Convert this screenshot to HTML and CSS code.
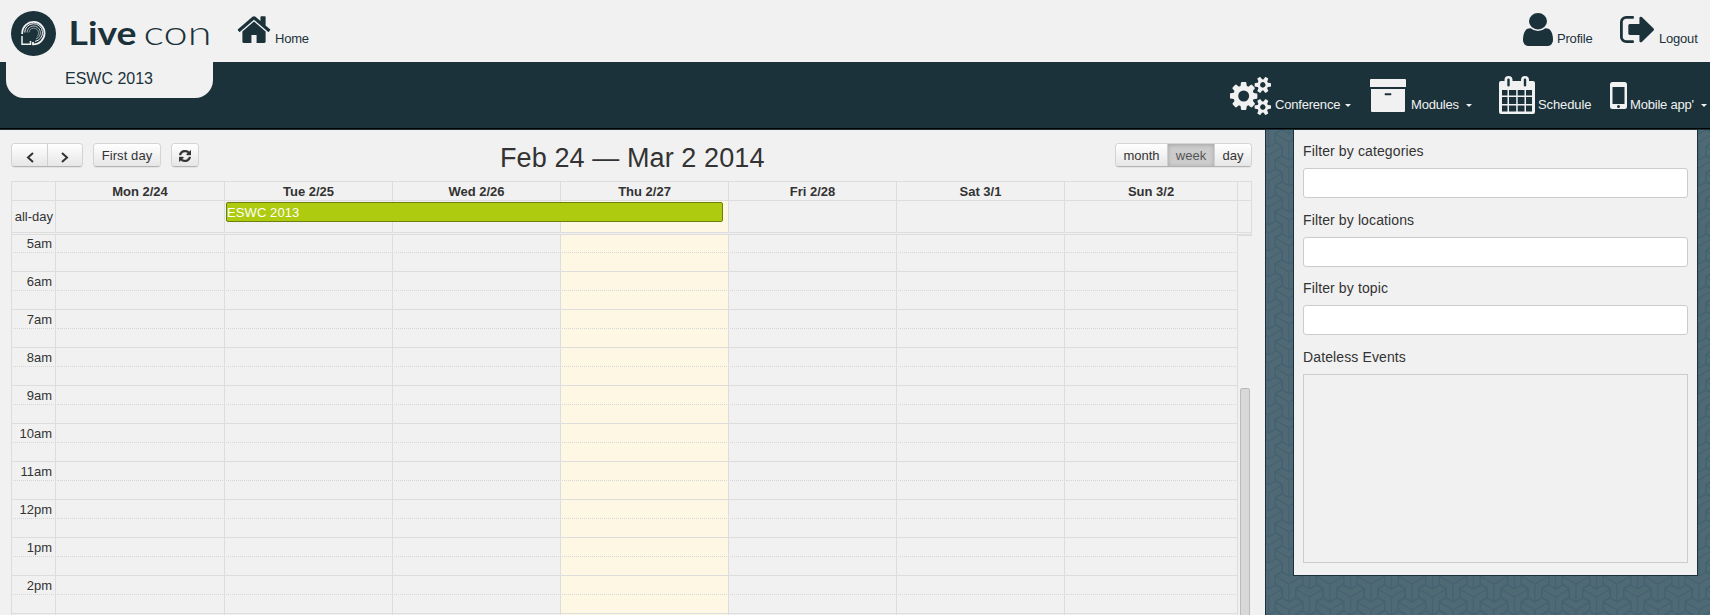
FILE: index.html
```html
<!DOCTYPE html>
<html lang="en">
<head>
<meta charset="utf-8">
<title>Live con - Schedule</title>
<link rel="stylesheet" href="styles.css">
</head>
<body>
<svg class="backdrop" width="1710" height="615" aria-hidden="true">
  <defs>
    <pattern id="weave" width="41" height="26" patternUnits="userSpaceOnUse" patternTransform="translate(1289 610)">
      <g id="weave-lines" fill="none" stroke="#446271" stroke-width="1.3">
        <g id="tripod"><path d="M0 0L-13.7-8M0 0L13.7-8M0 0V18M0-8L-6.8-12L-13.7-8V0L-6.8 4V14L0 18L6.8 14V4L13.7 0V-8L6.8-12Z"/></g>
        <use href="#tripod" y="26"/><use href="#tripod" x="41"/><use href="#tripod" x="41" y="26"/>
        <use href="#tripod" x="20.5" y="13"/><use href="#tripod" x="20.5" y="-13"/>
        <use href="#tripod" x="20.5" y="39"/>
      </g>
    </pattern>
  </defs>
  <rect width="1710" height="615" fill="#4f6975"/>
  <rect width="1710" height="615" fill="url(#weave)"/>
</svg>

<header class="top">
  <svg class="logo" width="220" height="62" viewBox="0 0 220 62">
    <circle cx="33.5" cy="33.5" r="22.5" fill="#1b323b"/>
    <g fill="none" stroke="#f1f1f1">
      <path stroke-width="1.8" d="M22.2 34V32.500A11.200 11.200 0 1 1 33 44.300V42"/>
      <path stroke-width="1.500" d="M22 36V44.300H30.500V41"/>
      <path stroke-width="1" d="M24.700 32.500A8.900 8.900 0 1 1 35 41.400"/>
      <path stroke-width=".7" d="M27 32.500A6.700 6.700 0 1 1 36 39"/>
      <path stroke-width=".5" d="M29 32.500A4.800 4.800 0 1 1 37 36.500"/>
    </g>
    <text class="logo-live" x="68.5" y="45" textLength="68" lengthAdjust="spacingAndGlyphs">Live</text>
    <text class="logo-con" x="143.5" y="45" textLength="68" lengthAdjust="spacingAndGlyphs">con</text>
  </svg>
  <a class="link home"><svg width="34" height="27" viewBox="53 245 1686 1291" preserveAspectRatio="none"><path d="M1472 992v480q0 26-19 45t-45 19h-384v-384h-256v384h-384q-26 0-45-19t-19-45v-480q0-1 .5-3t.5-3l575-474 575 474q1 2 1 6zm223-69l-62 74q-8 9-21 11h-3q-13 0-21-7l-692-577-692 577q-12 8-24 7-13-2-21-11l-62-74q-8-10-7-23.500t11-21.500l719-599q32-26 76-26t76 26l244 204v-195q0-14 9-23t23-9h192q14 0 23 9t9 23v408l219 182q10 8 11 21.500t-7 23.500z"/></svg><span>Home</span></a>
  <a class="link profile"><svg width="30" height="33" viewBox="256 128 1280 1536" preserveAspectRatio="none"><path d="M1536 1399q0 109-62.500 187t-150.500 78h-854q-88 0-150.500-78t-62.500-187q0-85 8.500-160.500t31.500-152 58.500-131 94-89 134.500-34.500q131 128 313 128t313-128q76 0 134.500 34.500t94 89 58.500 131 31.500 152 8.500 160.500zm-256-887q0 159-112.500 271.500t-271.500 112.500-271.500-112.500-112.500-271.500 112.500-271.500 271.500-112.500 271.500 112.500 112.500 271.500z"/></svg><span>Profile</span></a>
  <a class="link logout"><svg width="34" height="27" viewBox="64 256 1568 1280" preserveAspectRatio="none"><path d="M704 1440q0 4 1 20t.5 26.500-3 23.500-10 19.500-20.500 6.500h-320q-119 0-203.500-84.500t-84.500-203.500v-704q0-119 84.500-203.500t203.500-84.500h320q13 0 22.500 9.500t9.500 22.500q0 4 1 20t.5 26.500-3 23.500-10 19.500-20.500 6.500h-320q-66 0-113 47t-47 113v704q0 66 47 113t113 47h312l11.500 1 11.500 3 8 5.500 7 9 2 13.500zm928-544q0 26-19 45l-544 544q-19 19-45 19t-45-19-19-45v-288h-448q-26 0-45-19t-19-45v-384q0-26 19-45t45-19h448v-288q0-26 19-45t45-19 45 19l544 544q19 19 19 45z"/></svg><span>Logout</span></a>
</header>

<nav class="bar">
  <div class="tab">ESWC 2013</div>
  <a class="item conference"><svg width="41" height="38" viewBox="-64 20 1920 1752" preserveAspectRatio="none"><path d="M832 896q0-106-75-181t-181-75-181 75-75 181 75 181 181 75 181-75 75-181zm768 512q0-52-38-90t-90-38-90 38-38 90q0 53 37.500 90.500t90.500 37.500 90.500-37.500 37.500-90.500zm0-1024q0-52-38-90t-90-38-90 38-38 90q0 53 37.500 90.500t90.500 37.500 90.500-37.500 37.500-90.500zm-384 421v185q0 10-7 19.500t-16 10.500l-155 24q-11 35-32 76 34 48 90 115 7 11 7 20 0 12-7 19-23 30-82.500 89.500t-78.500 59.500q-11 0-21-7l-115-90q-37 19-77 31-11 108-23 155-7 24-30 24h-186q-11 0-20-7.500t-10-17.500l-23-153q-34-10-75-31l-118 89q-7 7-20 7-11 0-21-8-144-133-144-160 0-9 7-19 10-14 41-53t47-61q-23-44-35-82l-152-24q-10-1-17-9.500t-7-19.500v-185q0-10 7-19.500t16-10.500l155-24q11-35 32-76-34-48-90-115-7-11-7-20 0-12 7-20 22-30 82-89t79-59q11 0 21 7l115 90q34-18 77-32 11-108 23-154 7-24 30-24h186q11 0 20 7.500t10 17.500l23 153q34 10 75 31l118-89q8-7 20-7 11 0 21 8 144 133 144 160 0 8-7 19-12 16-42 54t-45 60q23 48 34 82l152 23q10 2 17 10.500t7 19.500zm640 533v140q0 16-149 31-12 27-30 52 51 113 51 138 0 4-4 7-122 71-124 71-8 0-46-47t-52-68q-20 2-30 2t-30-2q-14 21-52 68t-46 47q-2 0-124-71-4-3-4-7 0-25 51-138-18-25-30-52-149-15-149-31v-140q0-16 149-31 13-29 30-52-51-113-51-138 0-4 4-7 4-2 35-20t59-34 30-16q8 0 46 46.500t52 67.500q20-2 30-2t30 2q51-71 92-112l6-2q4 0 124 70 4 3 4 7 0 25-51 138 17 23 30 52 149 15 149 31zm0-1024v140q0 16-149 31-12 27-30 52 51 113 51 138 0 4-4 7-122 71-124 71-8 0-46-47t-52-68q-20 2-30 2t-30-2q-14 21-52 68t-46 47q-2 0-124-71-4-3-4-7 0-25 51-138-18-25-30-52-149-15-149-31v-140q0-16 149-31 13-29 30-52-51-113-51-138 0-4 4-7 4-2 35-20t59-34 30-16q8 0 46 46.500t52 67.500q20-2 30-2t30 2q51-71 92-112l6-2q4 0 124 70 4 3 4 7 0 25-51 138 17 23 30 52 149 15 149 31z"/></svg><span>Conference</span><i class="caret"></i></a>
  <a class="item modules"><svg width="36" height="33" viewBox="0 0 36 33"><path fill-rule="evenodd" d="M1 0H35Q36 0 36 1V8H0V1Q0 0 1 0ZM1 10H35V32Q35 33 34 33H2Q1 33 1 32ZM15 14.200Q14 15.200 15 16.200H21Q22 15.200 21 14.200Z"/></svg><span>Modules</span><i class="caret"></i></a>
  <a class="item schedule"><svg width="36" height="38" viewBox="0 0 36 38"><path fill-rule="evenodd" d="M2 5H5.500V4A4 4 0 0 1 13.500 4V5H22V4A4 4 0 0 1 30 4V5H34Q36 5 36 7V36Q36 38 34 38H2Q0 38 0 36V7Q0 5 2 5ZM8.300 3.500V9.500Q8.300 10.500 9.500 10.500T10.700 9.500V3.500Q10.700 2.500 9.500 2.500T8.300 3.500ZM24.800 3.500V9.500Q24.800 10.500 26 10.500T27.200 9.500V3.500Q27.200 2.500 26 2.500T24.800 3.500ZM3 14V19.500H8.500V14ZM10 14V19.500H17.200V14ZM18.700 14V19.500H25.500V14ZM27 14V19.500H33V14ZM3 21V28H8.500V21ZM10 21V28H17.200V21ZM18.700 21V28H25.500V21ZM27 21V28H33V21ZM3 29.500V35.500H8.500V29.500ZM10 29.500V35.500H17.200V29.500ZM18.700 29.500V35.500H25.500V29.500ZM27 29.500V35.500H33V29.500Z"/></svg><span>Schedule</span></a>
  <a class="item mobile"><svg width="17" height="27" viewBox="0 0 17 27"><path fill-rule="evenodd" d="M2.500 0H14.500Q17 0 17 2.500V24.500Q17 27 14.500 27H2.500Q0 27 0 24.500V2.500Q0 0 2.500 0ZM2.500 5V22H14.500V5ZM8.500 23A1.500 1.500 0 1 0 8.500 26A1.500 1.500 0 1 0 8.500 23Z"/></svg><span>Mobile app'</span><i class="caret"></i></a>
</nav>

<main class="page">
  <section class="calendar">
    <div class="toolbar">
      <div class="group">
        <button class="btn arrow"><svg width="8" height="11" viewBox="0 0 8 11"><path d="M7 1L2 5.500L7 10"/></svg></button>
        <button class="btn arrow"><svg width="8" height="11" viewBox="0 0 8 11"><path d="M1 1L6 5.500L1 10"/></svg></button>
      </div>
      <div class="group"><button class="btn first">First day</button></div>
      <div class="group"><button class="btn refresh"><svg width="12" height="12" viewBox="0 0 1536 1536"><path fill="#333" stroke="#333" stroke-width="50" d="M1511 928q0 5-1 7-64 268-268 434.500T764 1536q-146 0-282.500-55T238 1324l-129 129q-19 19-45 19t-45-19-19-45V960q0-26 19-45t45-19h448q26 0 45 19t19 45-19 45l-137 137q71 66 161 102t187 36q134 0 250-65t186-179q11-17 53-117 8-23 30-23h192q13 0 22.500 9.500t9.500 22.500zm25-800v448q0 26-19 45t-45 19h-448q-26 0-45-19t-19-45 19-45l138-138Q969 256 768 256q-134 0-250 65T332 500q-11 17-53 117-8 23-30 23H50q-13 0-22.500-9.500T18 608v-7q65-268 270-434.500T768 0q146 0 284 55.500T1297 212l130-129q19-19 45-19t45 19 19 45z"/></svg></button></div>
      <h1 class="title">Feb 24 — Mar 2 2014</h1>
      <div class="group views">
        <button class="btn month">month</button><button class="btn week active">week</button><button class="btn day">day</button>
      </div>
    </div>
    <div class="grid">
      <div class="row head"><b></b><b>Mon 2/24</b><b>Tue 2/25</b><b>Wed 2/26</b><b>Thu 2/27</b><b>Fri 2/28</b><b>Sat 3/1</b><b>Sun 3/2</b><b></b></div>
      <div class="row allday"><b>all-day</b><b></b><b></b><b></b><b class="today"></b><b></b><b></b><b></b><b></b><div class="event">ESWC 2013</div></div>
      <div class="divider"></div>
      <div class="body">
        <div class="slots">
          <div class="row hour"><b>5am</b><b></b><b></b><b></b><b class="today"></b><b></b><b></b><b></b></div>
          <div class="row hour"><b>6am</b><b></b><b></b><b></b><b class="today"></b><b></b><b></b><b></b></div>
          <div class="row hour"><b>7am</b><b></b><b></b><b></b><b class="today"></b><b></b><b></b><b></b></div>
          <div class="row hour"><b>8am</b><b></b><b></b><b></b><b class="today"></b><b></b><b></b><b></b></div>
          <div class="row hour"><b>9am</b><b></b><b></b><b></b><b class="today"></b><b></b><b></b><b></b></div>
          <div class="row hour"><b>10am</b><b></b><b></b><b></b><b class="today"></b><b></b><b></b><b></b></div>
          <div class="row hour"><b>11am</b><b></b><b></b><b></b><b class="today"></b><b></b><b></b><b></b></div>
          <div class="row hour"><b>12pm</b><b></b><b></b><b></b><b class="today"></b><b></b><b></b><b></b></div>
          <div class="row hour"><b>1pm</b><b></b><b></b><b></b><b class="today"></b><b></b><b></b><b></b></div>
          <div class="row hour"><b>2pm</b><b></b><b></b><b></b><b class="today"></b><b></b><b></b><b></b></div>
          <div class="row hour"><b></b><b></b><b></b><b></b><b class="today"></b><b></b><b></b><b></b></div>
        </div>
        <div class="scroll"><div class="thumb"></div></div>
      </div>
    </div>
  </section>
  <aside class="filters">
    <label>Filter by categories</label><div class="field"></div>
    <label>Filter by locations</label><div class="field"></div>
    <label>Filter by topic</label><div class="field"></div>
    <label>Dateless Events</label><div class="dateless"></div>
  </aside>
</main>
</body>
</html>
```
FILE: styles.css
```css
* { box-sizing: border-box; }
body {
  margin: 0;
  height: 615px;
  overflow: hidden;
  display: flex;
  flex-direction: column;
  font: 13px/18px "Liberation Sans", Arial, sans-serif;
  color: #333;
}
svg { display: block; flex: none; }
.backdrop { position: absolute; left: 0; top: 0; z-index: -1; }

/* top header */
.top { height: 62px; flex: none; background: #f1f1f1; display: flex; align-items: flex-start; color: #1b323b; fill: #1b323b; }
.logo-live { font: 700 32px Lato, sans-serif; }
.logo-con { font: 300 34px "Lato Light", Lato, sans-serif; }
.link { display: flex; white-space: nowrap; }
.link span { width: 36px; margin-top: 30px; letter-spacing: -0.2px; }
.link.home { margin-left: 16px; }
.home svg { margin: 16px 4px 0 1px; }
.profile { margin-left: auto; }
.profile svg { margin: 13px 4px 0 0; }
.link.profile span { width: 63px; }
.logout svg { margin: 16px 5px 0 0; }
.link.logout span { width: 51px; }

/* navigation bar */
.bar { height: 68px; flex: none; background: #1b323b; border-bottom: 1px solid #1b323b; box-shadow: inset 0 -1px #000; display: flex; color: #f1f1f1; fill: #f1f1f1; align-items: flex-start; }
.tab { width: 207px; height: 36px; margin: 0 auto 0 6px; padding-right: 1px; background: #f1f1f1; border-radius: 0 0 18px 18px; color: #1b323b; font-size: 16px; line-height: 33px; text-align: center; }
.item { display: flex; white-space: nowrap; }
.item span { margin-top: 34px; letter-spacing: -0.2px; }
.caret { width: 6px; height: 3px; margin-top: 42px; border: 3px solid transparent; border-top-color: #f1f1f1; border-bottom: 0; }
.conference svg { margin: 15px 4px 0 0; }
.conference span { width: 70px; }
.modules { margin-left: 19px; }
.modules svg { margin: 17px 5px 0 0; }
.modules span { width: 55px; }
.schedule { margin-left: 27px; }
.schedule svg { margin: 14px 3px 0 0; }
.schedule span { width: 72px; letter-spacing: -0.1px; }
.mobile svg { margin: 20px 3px 0 0; }
.mobile span { width: 71px; }
.mobile .caret { margin-right: 3px; }

/* content */
.page { display: flex; flex: 1; min-height: 0; align-items: flex-start; }
.calendar { width: 1266px; height: 485px; overflow: hidden; background: #f1f1f1; border-right: 1px solid #1b323b; padding: 13px 0 0 11px; }
.toolbar { width: 1241px; height: 38px; display: flex; align-items: flex-start; }
.group { display: flex; margin-right: 10px; border: 1px solid #d4d4d4; border-bottom-color: #b3b3b3; border-radius: 4px; overflow: hidden; height: 24px; box-shadow: 0 1px 1px rgba(0,0,0,.06); }
.btn { display: flex; align-items: center; justify-content: center; height: 22px; padding: 1px 0 0; border: 0; background: linear-gradient(#fff, #e6e6e6); font: inherit; color: #333; }
.btn + .btn { border-left: 1px solid #d0d0d0; }
.arrow { width: 35px; }
.arrow svg { fill: none; stroke: #333; stroke-width: 2; margin-top: 4px; }
.first { width: 66px; letter-spacing: 0.1px; }
.refresh { width: 26px; }
.title { flex: 1; margin: -1px 0 0 291px; font-size: 27px; line-height: 32px; font-weight: 400; letter-spacing: 0.1px; white-space: nowrap; }
.views { margin: 0; }
.month { width: 51px; }
.week { width: 47px; }
.day { width: 37px; }
.active { background: #ccc; box-shadow: inset 0 1px 4px rgba(0,0,0,.2); color: #555; }

.grid { width: 1241px; }
.row { display: grid; grid-template-columns: 44px 169px repeat(5, 168px) 173px 15px; }
.row b { font-weight: 400; border-left: 1px solid #ddd; border-top: 1px solid #ddd; }
.head b { height: 19px; font-weight: 700; text-align: center; line-height: 20px; }
.head b:last-child, .allday b:nth-child(9) { border-right: 1px solid #ddd; }
.allday { height: 32px; grid-template-rows: 32px; }
.allday b { line-height: 32px; text-align: right; padding-right: 2px; grid-row: 1; }
.allday b:nth-child(1) { grid-column: 1; }
.allday b:nth-child(2) { grid-column: 2; }
.allday b:nth-child(3) { grid-column: 3; }
.allday b:nth-child(4) { grid-column: 4; }
.allday b:nth-child(5) { grid-column: 5; }
.allday b:nth-child(6) { grid-column: 6; }
.allday b:nth-child(7) { grid-column: 7; }
.allday b:nth-child(8) { grid-column: 8; }
.allday b:nth-child(9) { grid-column: 9; }
.row .today { background: #fdf7e3; }
.event { grid-row: 1; grid-column: 3 / 6; height: 20px; margin: 2px 5px 0 2px; background: #aecb10; border: 1px solid #6d800c; border-radius: 2px; color: #fff; line-height: 20px; letter-spacing: 0.1px; }
.divider { height: 2px; border: 1px solid #ddd; border-bottom: 0; }
.body { display: flex; align-items: flex-start; }
.slots { width: 1226px; }
.hour { height: 38px; grid-template-columns: 44px 169px repeat(5, 168px) 173px; }
.hour:first-child { height: 37px; }
.hour b { display: flex; flex-direction: column; text-align: right; line-height: 18px; padding: 0 1px; }
.hour b:first-child { padding: 1px 3px 0 1px; }
.hour:first-child b:first-child { padding-top: 0; }
.hour b::after { content: ""; border-top: 1px dotted #d6d6d6; margin-top: 18px; }
.hour b:first-child::after { margin: -1px -2px 0 0; }
.hour:first-child b::after { margin-top: 17px; }
.hour:first-child b:first-child::after { margin-top: -1px; }
.hour:last-child b:first-child::after { margin-top: 17px; }
.scroll { width: 15px; height: 400px; border-left: 1px solid #ddd; border-top: 2px solid #ddd; padding: 152px 1px 0 2px; }
.thumb { width: 10px; height: 260px; background: #d8d8d8; border: 1px solid #bbb; border-radius: 2px; }

/* filter panel */
.filters { width: 405px; height: 447px; margin: -1px 0 0 27px; background: #f1f1f1; border: 1px solid #1b323b; padding: 11px 9px 0; display: flex; flex-direction: column; font-size: 14px; line-height: 20px; letter-spacing: 0.12px; }
.filters label { height: 27px; }
.field { height: 30px; margin: 0 0 11.500px; background: #fff; border: 1px solid #ccc; border-radius: 3px; }
.dateless { height: 189px; border: 1px solid #ccc; }
```
